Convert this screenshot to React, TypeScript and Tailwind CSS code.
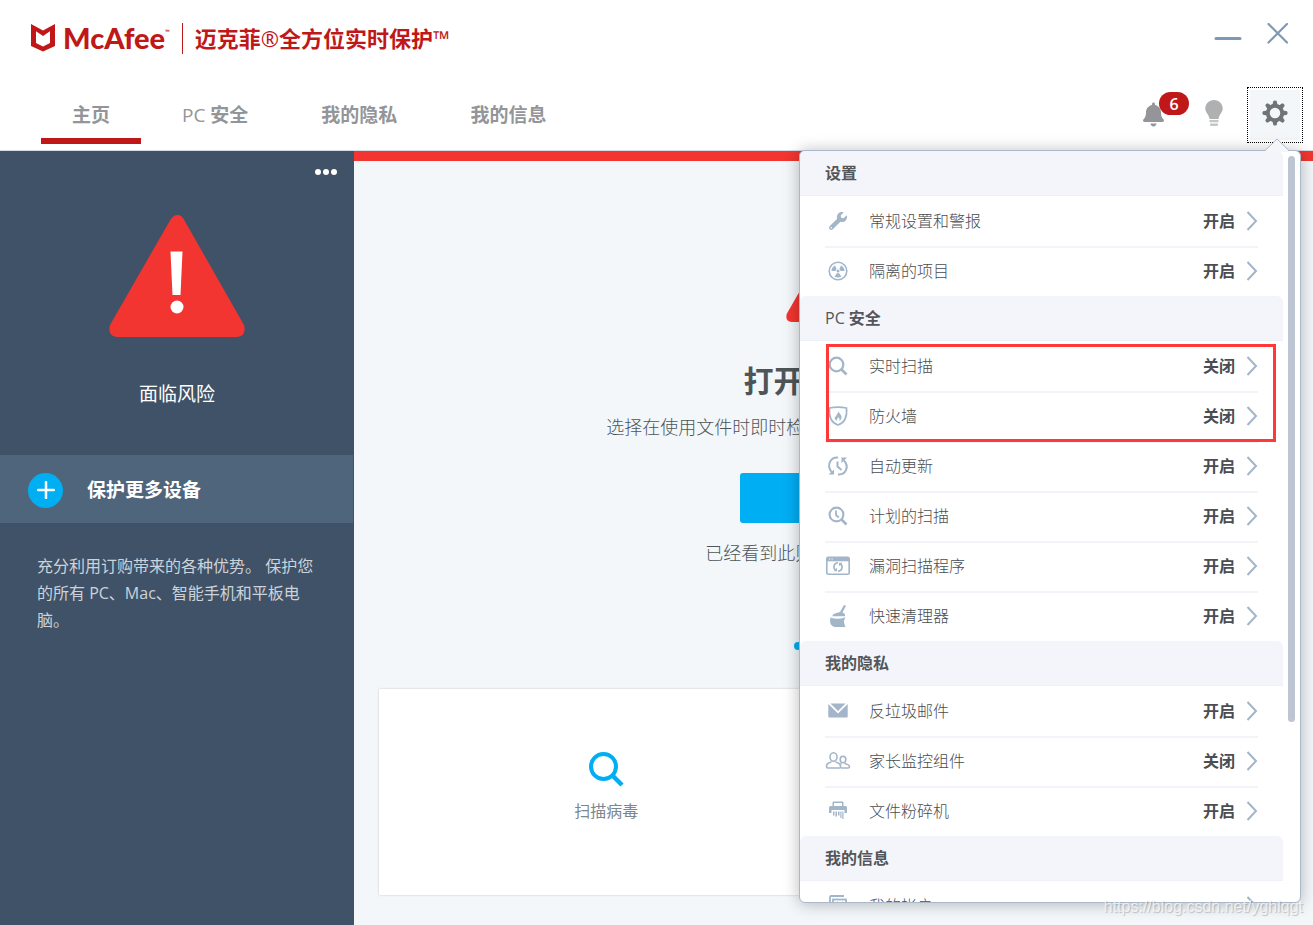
import React from "react";
import { FaWrench, FaBell } from "react-icons/fa";

const AlertTriangle = ({ className }: { className: string }) => (
  <svg viewBox="0 0 136 122" className={className}>
    <path
      d="M61 5.500Q64 0 68.500 0Q73 0 75.500 5.500L135 110Q138 121 128 122H8Q-2 121 1 110Z"
      fill="#f23530"
    />
    <path d="M61.500 36.500h12l-2 43.500h-8z" fill="#fff" />
    <circle cx="68" cy="92" r="6.500" fill="#fff" />
  </svg>
);

const GearIcon = () => (
  <svg viewBox="0 0 26 26" className="h-[26px] w-[26px]" fill="#6f7479">
    {[0, 45, 90, 135, 180, 225, 270, 315].map((a) => (
      <path key={a} d="M11.300 1Q13 -0.200 14.700 1L15.500 5H10.500Z" transform={`rotate(${a} 13 13)`} />
    ))}
    <circle cx="13" cy="13" r="7.200" fill="none" stroke="#6f7479" strokeWidth="3.900" />
  </svg>
);

const BulbIcon = () => (
  <svg viewBox="0 0 18 26" className="h-[26px] w-[18px]" fill="#aeb0b1">
    <path d="M9 0C14 0 17.700 3.700 17.700 8.500C17.700 12.500 14 14.500 13.500 19H4.500C4 14.500 0.300 12.500 0.300 8.500C0.300 3.700 4 0 9 0Z" />
    <path d="M4.500 20h9v2.200h-9zM5 23.500h8v2q-4 1-8 0z" fill="#c3c5c6" />
  </svg>
);

const RadiationIcon = () => (
  <svg viewBox="0 0 26 26" className="h-[26px] w-[26px]" fill="#a3b5c9">
    <circle cx="13" cy="13" r="8.800" fill="none" stroke="#a3b5c9" strokeWidth="1.600" />
    <circle cx="13" cy="13" r="1.500" />
    {[0, 120, 240].map((a) => (
      <path
        key={a}
        d="M14.200 15.300L16.400 18.700Q13 20.300 9.600 18.700L11.800 15.300Z"
        transform={`rotate(${a} 13 13)`}
      />
    ))}
  </svg>
);

const SearchIcon = () => (
  <svg viewBox="0 0 26 26" className="h-[26px] w-[26px]" fill="none" stroke="#a3b5c9">
    <circle cx="11.500" cy="11.500" r="6.800" strokeWidth="2.200" />
    <path d="M16.500 16.500L21.500 21.500" strokeWidth="2.600" />
  </svg>
);

const ShieldIcon = () => (
  <svg viewBox="0 0 26 26" className="h-[26px] w-[26px]">
    <path
      d="M4.500 5Q13 3.400 21.500 5C22.300 14 19 20 13 22C7 20 3.700 14 4.500 5Z"
      fill="none"
      stroke="#a3b5c9"
      strokeWidth="1.700"
    />
    <path d="M13.500 8C14 10.500 17 11.500 16.500 15C16.200 16.500 15.300 17.500 14.500 17.800Q15 15.500 13.200 14Q12 15.500 12 17.800C10 17 9.300 15 10 13.200L11 14C10.900 11.500 13.500 10.500 13.500 8Z" fill="#a3b5c9" />
  </svg>
);

const UpdateIcon = () => (
  <svg viewBox="0 0 26 26" className="h-[26px] w-[26px]" fill="none" stroke="#a3b5c9" strokeWidth="2">
    <path d="M13 4.500C5 4 1.500 12.500 6.500 19" />
    <path d="M13 21.500C21 22 24.500 13.500 19 7.500" />
    <path d="M12.500 8.500V13.500L16.500 17" />
    <path d="M3.500 21.500L9 16.500V21.500ZM22 4.500H16.500V10Z" fill="#a3b5c9" stroke="none" />
  </svg>
);

const ScheduleIcon = () => (
  <svg viewBox="0 0 26 26" className="h-[26px] w-[26px]" fill="none" stroke="#a3b5c9">
    <circle cx="11.500" cy="11.500" r="6.900" strokeWidth="2.100" />
    <path d="M11 7.500V12L13.800 14.500" strokeWidth="1.800" />
    <path d="M16.500 16.500L21.500 21.500" strokeWidth="2.600" />
  </svg>
);

const VulnIcon = () => (
  <svg viewBox="0 0 26 26" className="h-[26px] w-[26px]" fill="none" stroke="#a3b5c9" strokeWidth="1.600">
    <rect x="1.800" y="4.300" width="22.400" height="17" rx="1.500" />
    <path d="M2 6.500H24" strokeWidth="3.600" />
    <path d="M4 6h1.200M6.500 6h1.200" stroke="#fff" strokeWidth="1.200" />
    <path d="M13 9.800C8.500 10 7.800 15 10.500 17M13 18.200C17.500 18 18.200 13 15.500 11" />
    <path d="M8.500 18.300h3.500v-3.500zM17.500 9.700H14v3.500z" fill="#a3b5c9" stroke="none" />
  </svg>
);

const BroomIcon = () => (
  <svg viewBox="0 0 26 26" className="h-[26px] w-[26px]" fill="#a3b5c9">
    <path d="M19 2L21 2.700L17.500 9.500Q20.500 10.500 20 13.300H7Q8 10.500 11.500 10L15 9Z" />
    <path d="M5.500 14.500Q12 17.200 20.500 14.300Q17.500 19 20.500 24H9.500Q3.500 22 5.500 14.500Z" />
  </svg>
);

const MailIcon = () => (
  <svg viewBox="0 0 26 26" className="h-[26px] w-[26px]" fill="#a3b5c9">
    <path d="M5.500 5.500H20.500L13 13Z" />
    <path d="M3.300 6L13 15.500L22.700 6V18.500Q22.700 19.500 21.700 19.500H4.300Q3.300 19.500 3.300 18.500Z" />
  </svg>
);

const FamilyIcon = () => (
  <svg viewBox="0 0 26 26" className="h-[26px] w-[26px]" fill="none" stroke="#a3b5c9" strokeWidth="1.600">
    <ellipse cx="8.500" cy="9" rx="3.500" ry="4.200" />
    <path d="M6.500 14Q1.500 15 1.500 18.500Q1.500 20 3 20H14.500Q16 20 15.500 18Q15 15 10.500 14" />
    <ellipse cx="18" cy="11.500" rx="2.800" ry="3.300" />
    <path d="M16.500 15.500L15.500 16.500M19.500 15.500Q24.500 16.500 24.500 19Q24.500 20 23 20H16" />
  </svg>
);

const ShredIcon = () => (
  <svg viewBox="0 0 26 26" className="h-[26px] w-[26px]" fill="#a3b5c9">
    <path d="M7.500 8V4.500Q7.500 3.500 8.500 3.500H17.500Q18.500 3.500 18.500 4.500V8H20.500Q22 8 22 9.500V15H19.500V12H6.500V15H4V9.500Q4 8 5.500 8ZM9 8H17V5H9Z" />
    <path d="M8 13.500h1.500v4H8zM10.500 13.500H12v5h-1.500zM13 13.500h1.500v4H13zM15.300 13.500h1.200v6.500h-1.200zM17.300 13.500h1.200v7.500h-1.200z" />
  </svg>
);

const AccountIcon = () => (
  <svg viewBox="0 0 26 26" className="h-[26px] w-[26px]" fill="none" stroke="#a3b5c9" strokeWidth="1.800">
    <path d="M5 17V4.500Q5 3 6 3H19" />
    <rect x="8" y="6.500" width="13" height="13" />
    <path d="M12 9L15 12L18 9" />
  </svg>
);

const Chevron = () => (
  <svg viewBox="0 0 12 20" className="h-5 w-3" fill="none" stroke="#a3b5c9" strokeWidth="2">
    <path d="M1.500 1L10 10L1.500 19" />
  </svg>
);

type Item = { icon: React.ReactNode; label: string; status?: string };

type Section = { prefix?: string; title: string; highlight?: boolean; items: Item[] };

const sections: Section[] = [
  {
    title: "设置",
    items: [
      { icon: <FaWrench size={18} color="#a3b5c9" />, label: "常规设置和警报", status: "开启" },
      { icon: <RadiationIcon />, label: "隔离的项目", status: "开启" },
    ],
  },
  {
    prefix: "PC",
    title: "安全",
    highlight: true,
    items: [
      { icon: <SearchIcon />, label: "实时扫描", status: "关闭" },
      { icon: <ShieldIcon />, label: "防火墙", status: "关闭" },
      { icon: <UpdateIcon />, label: "自动更新", status: "开启" },
      { icon: <ScheduleIcon />, label: "计划的扫描", status: "开启" },
      { icon: <VulnIcon />, label: "漏洞扫描程序", status: "开启" },
      { icon: <BroomIcon />, label: "快速清理器", status: "开启" },
    ],
  },
  {
    title: "我的隐私",
    items: [
      { icon: <MailIcon />, label: "反垃圾邮件", status: "开启" },
      { icon: <FamilyIcon />, label: "家长监控组件", status: "关闭" },
      { icon: <ShredIcon />, label: "文件粉碎机", status: "开启" },
    ],
  },
  {
    title: "我的信息",
    items: [{ icon: <AccountIcon />, label: "我的帐户" }],
  },
];

const SettingsMenu = () => {
  return (
    <div className="absolute top-[150px] right-3 z-10 w-[502px]">
      <div className="h-[753px] overflow-hidden rounded-md border border-[#a9b8cb] bg-white pr-[17px] shadow-[0_1px_16px_rgba(0,0,0,0.28)]">
        {sections.map((section) => (
          <section key={section.title} className="relative">
            <h2 className="flex h-[45px] items-center gap-1 rounded-t-md border-b border-[#eef2f8] bg-[#f4f5fa] pl-[25px] text-base font-bold text-[#53565a]">
              {section.prefix && <span className="font-medium">{section.prefix}</span>}
              {section.title}
            </h2>
            <ul className="px-[25px]">
              {section.items.map((item) => (
                <li key={item.label} className="h-[50px] border-[#f3f4f9] not-first:border-t-2 not-first:pb-0.5">
                  <button className="flex h-full w-full items-center text-left text-[#4a4d51]">
                    <span className="flex w-[26px] justify-center">{item.icon}</span>
                    <span className="ml-[18px] flex-1 text-base font-light">{item.label}</span>
                    {item.status && <span className="text-base font-bold">{item.status}</span>}
                    <span className="ml-[11px]">
                      <Chevron />
                    </span>
                  </button>
                </li>
              ))}
            </ul>
            {section.highlight && (
              <div className="pointer-events-none absolute top-12 right-[7px] left-[26px] h-[98px] border-3 border-[#ff3838]"></div>
            )}
          </section>
        ))}
      </div>
      {/* scroll thumb */}
      <div className="absolute top-1.5 right-1.5 h-[566px] w-[7px] rounded-full bg-[#bdc5d2]"></div>
      <svg viewBox="0 0 24 14" className="absolute -top-3 right-3 h-[14px] w-6">
        <path d="M0 13L12 1L24 13V14H0Z" fill="#f4f7fa" />
        <path d="M0 12.500L12 1L24 12.500" fill="none" stroke="#a9b8cb" />
      </svg>
    </div>
  );
};

const Header = () => {
  return (
    <header className="border-b border-[#d5dce2] bg-white">
      <div className="flex h-[76px] items-center justify-between pr-6 pl-[31px]">
        <div className="flex items-center">
          <svg viewBox="0 0 24 28" className="h-7 w-6">
            <path d="M0 0L12 6.500L24 0V22L12 27.500L0 22ZM5 7.300V19L12 22.500L19 19V7.300L12 12Z" fill="#c01818" />
          </svg>
          <p className="ml-2 flex font-[Lato] text-[29px] leading-7 font-black text-[#c01818]">
            McAfee<span className="text-[6px] leading-4">™</span>
          </p>
          <div className="ml-3 h-[31px] w-px bg-[#c01818]"></div>
          <h1 className="ml-3 text-[22px] font-bold text-[#c01818]">
            迈克菲<span className="font-normal">®</span>全方位实时保护<span className="font-normal">™</span>
          </h1>
        </div>
        <div className="flex items-center gap-[25px]">
          <button aria-label="最小化">
            <svg viewBox="0 0 28 22" className="h-[22px] w-7" stroke="#7f99b5" strokeWidth="3" strokeLinecap="round">
              <path d="M2 11.500H26" />
            </svg>
          </button>
          <button aria-label="关闭">
            <svg viewBox="0 0 22 22" className="mb-2 h-[22px] w-[22px]" stroke="#7f99b5" strokeWidth="2.200" strokeLinecap="round">
              <path d="M1.500 1L20 19.500M20 1L1.500 19.500" />
            </svg>
          </button>
        </div>
      </div>
      <div className="flex h-[74px] items-end justify-between pb-1.5 pl-[41px]">
        <nav className="flex gap-[9px] text-[19px] font-bold text-[#939598]">
          <a href="#home" className="h-[58px] border-b-6 border-[#c01818] px-[31px] pt-[15px] leading-7">
            主页
          </a>
          <a href="#pc" className="px-8 pt-[15px] leading-7">
            <span className="font-normal">PC</span> 安全
          </a>
          <a href="#privacy" className="px-8 pt-[15px] leading-7">
            我的隐私
          </a>
          <a href="#info" className="px-8 pt-[15px] leading-7">
            我的信息
          </a>
        </nav>
        <div className="flex items-center pr-2.5 pb-px">
          <button aria-label="通知" className="relative mr-[41px] mb-px">
            <FaBell className="h-[25px] w-[21px]" color="#939598" />
            <span className="absolute -top-2.5 left-4 flex h-[23px] w-[30px] items-center justify-center rounded-full bg-[#c01818] text-base font-semibold text-white">
              6
            </span>
          </button>
          <button aria-label="提示" className="mr-6 mb-1">
            <BulbIcon />
          </button>
          <button aria-label="设置" className="h-14 w-14 border border-dotted border-black p-0.5">
            <span className="flex h-full w-full items-center justify-center bg-[#f3f7fa] pb-1">
              <GearIcon />
            </span>
          </button>
        </div>
      </div>
    </header>
  );
};

const Sidebar = () => {
  return (
    <aside className="w-[354px] shrink-0 bg-[#3f5267]">
      <div className="flex justify-end pt-[18px] pr-[17px]">
        <button aria-label="更多" className="flex gap-0.5">
          <span className="h-1.5 w-1.5 rounded-full bg-white"></span>
          <span className="h-1.5 w-1.5 rounded-full bg-white"></span>
          <span className="h-1.5 w-1.5 rounded-full bg-white"></span>
        </button>
      </div>
      <div className="flex h-[280px] flex-col items-center pt-10">
        <AlertTriangle className="h-[122px] w-[136px]" />
        <p className="mt-[43px] text-[19px] leading-7 text-white">面临风险</p>
      </div>
      <button className="flex h-[68px] w-[353px] items-center bg-[#4f657c] pt-0.5 pl-7 text-left">
        <span className="flex h-[35px] w-[35px] items-center justify-center rounded-full bg-[#00aef3]">
          <svg viewBox="0 0 18 18" className="h-[18px] w-[18px]" stroke="#fff" strokeWidth="2.500" strokeLinecap="round">
            <path d="M9 1V17M1 9H17" />
          </svg>
        </span>
        <span className="ml-6 text-[19px] font-bold text-white">保护更多设备</span>
      </button>
      <p className="mt-[30px] pl-[37px] text-base leading-[27px] text-[#cdd3da]">
        充分利用订购带来的各种优势。 保护您
        <br />
        的所有 PC、Mac、智能手机和平板电
        <br />
        脑。
      </p>
    </aside>
  );
};

const MainPanel = () => {
  return (
    <main className="flex-1 border-t-10 border-[#f23530] bg-[#f3f7fa]">
      <div className="flex flex-col items-center pt-[76px] text-[#4d5558]">
        <AlertTriangle className="h-[85px] w-[95px]" />
        <h2 className="mt-[39px] text-[30px] leading-10 font-bold">打开实时扫描</h2>
        <p className="mt-3 text-lg leading-7 font-light">选择在使用文件时即时检查文件， 以防止恶意软件入侵。</p>
        <button className="mt-8 h-[50px] w-[187px] rounded-[3px] bg-[#00aef3] text-lg font-bold text-white">
          打开
        </button>
        <p className="mt-4 text-lg leading-7 font-light">已经看到此则消息？ 将其关闭。</p>
        <div className="mt-[75px] flex gap-4">
          <span className="h-2 w-2 rounded-full bg-[#00aef3]"></span>
          <span className="h-2 w-2 rounded-full bg-[#c3ccd5]"></span>
          <span className="h-2 w-2 rounded-full bg-[#c3ccd5]"></span>
          <span className="h-2 w-2 rounded-full bg-[#c3ccd5]"></span>
        </div>
      </div>
      <div className="mx-[25px] mt-[39px] grid h-[206px] grid-cols-2 bg-white shadow-[0_0_2px_rgba(0,0,0,0.2)]">
        <button className="flex flex-col items-center pt-[62px] text-base text-[#7b878e]">
          <svg viewBox="0 0 36 36" className="h-9 w-9" fill="none" stroke="#00aef3" strokeWidth="4">
            <circle cx="15.500" cy="15.500" r="12.500" />
            <path d="M24.500 24.500L34 34" strokeWidth="4.500" />
          </svg>
          <span className="mt-3">扫描病毒</span>
        </button>
      </div>
    </main>
  );
};

const App = () => {
  return (
    <div className="relative flex min-h-screen flex-col bg-[#f3f7fa] font-['Open_Sans','Noto_Sans_CJK_SC',sans-serif]">
      <Header />
      <div className="flex flex-1">
        <Sidebar />
        <MainPanel />
      </div>
      <SettingsMenu />
      <p className="absolute right-2.5 bottom-2 z-20 font-['Liberation_Sans',sans-serif] text-base leading-5 text-white/70 [text-shadow:1px_1px_1px_rgba(0,0,0,0.2)]">
        https://blog.csdn.net/yghlqgt
      </p>
    </div>
  );
};

export default App;
